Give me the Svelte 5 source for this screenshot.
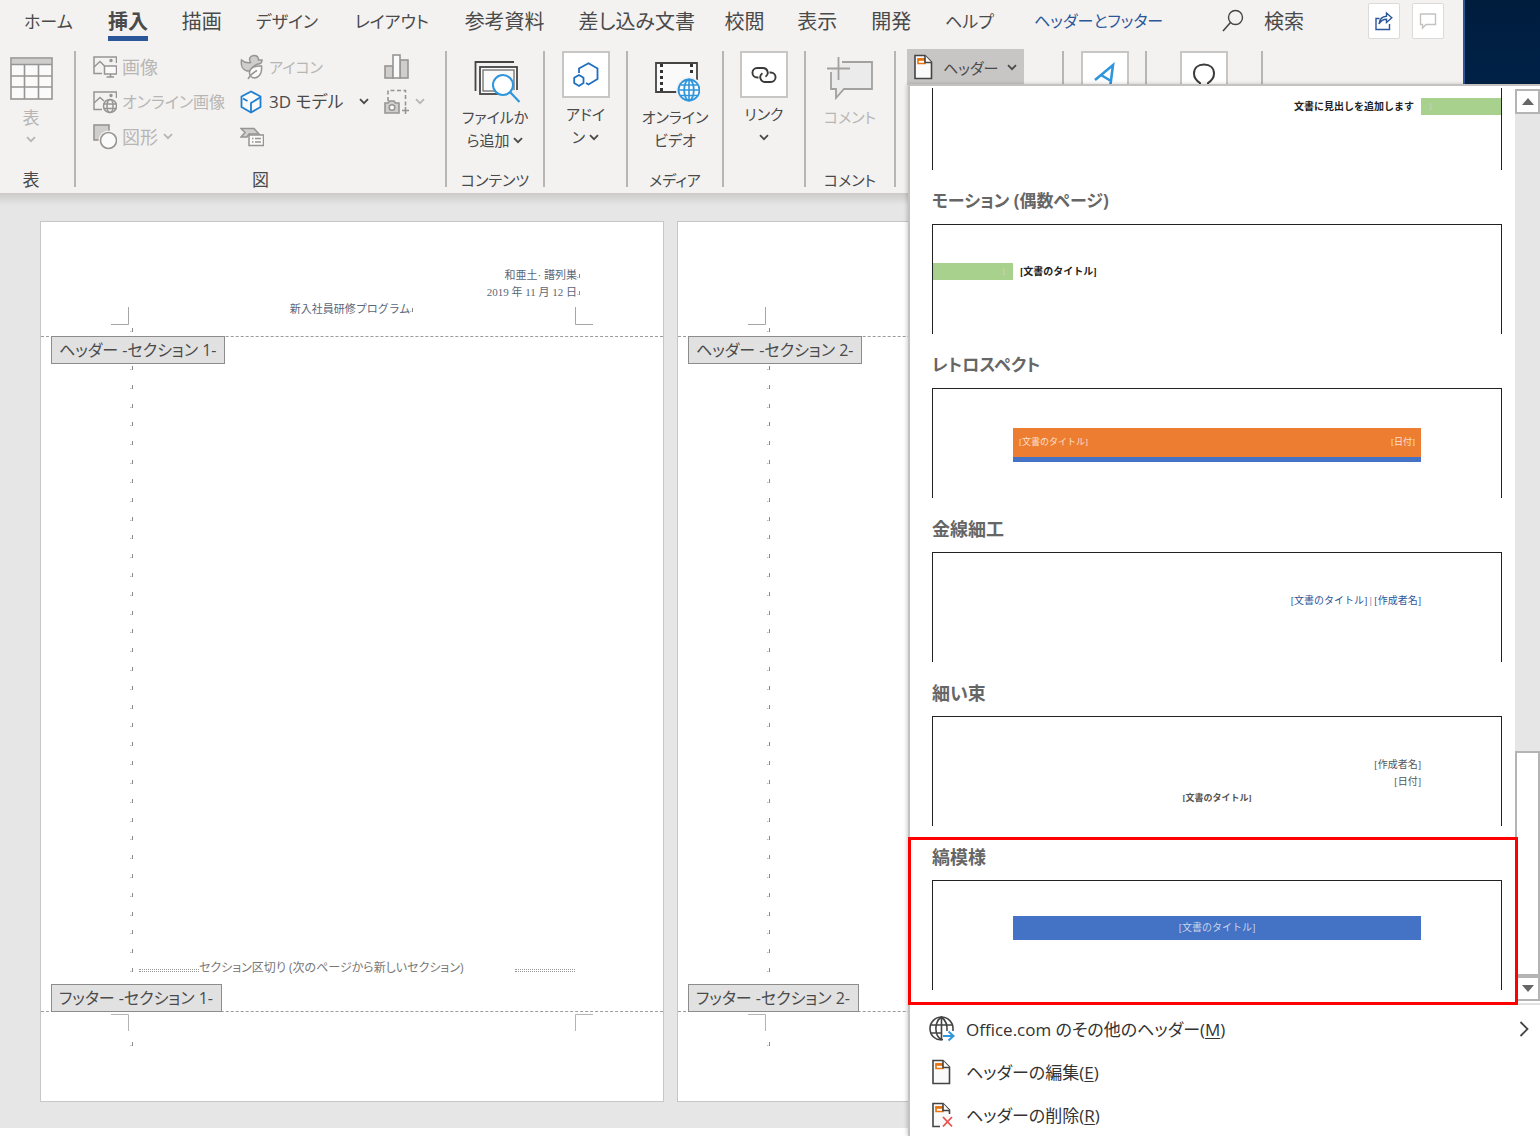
<script>
  const tabs = [
    { label: 'ホーム', kana: true },
    { label: '挿入', active: true },
    { label: '描画' },
    { label: 'デザイン', kana: true },
    { label: 'レイアウト', kana: true },
    { label: '参考資料' },
    { label: '差し込み文書' },
    { label: '校閲' },
    { label: '表示' },
    { label: '開発' },
    { label: 'ヘルプ', kana: true },
    { label: 'ヘッダーとフッター', kana: true, context: true },
  ];
  const pages = [
    { n: 1, header: true },
    { n: 2, header: false },
  ];
  const marks = Array.from({ length: 33 }, (_, i) => i);
</script>

{#snippet chevron()}
  <svg class="chev" width="10" height="7" viewBox="0 0 10 7"><path d="M1 1.2L5 5.2L9 1.2" fill="none" stroke="currentColor" stroke-width="1.800" /></svg>
{/snippet}

{#snippet pilcrow()}
  <svg class="mark" width="4" height="6" viewBox="0 0 4 6"><path d="M2.500 1V5" stroke="#8a8a8a" /><path d="M0 4.500H1.500" stroke="#bbb" /></svg>
{/snippet}

{#snippet docIcon(remove)}
  <svg width="24" height="26" viewBox="-2 0 24 26">
    <path d="M2 1.500H12L18.500 8V24.500H2Z" fill="#fafafa" />
    <path d="M5 5H12V9.500H5Z" fill="#fff" stroke="#e8730c" stroke-width="1.600" />
    <path d="M4.500 5.500H12" stroke="#e8730c" stroke-width="2.600" />
    {#if remove}
      <path d="M9 24.500H2V1.500H12L18.500 8V12" fill="none" stroke="#444" stroke-width="1.600" />
      <path d="M12 15L21 24.500M21 15L12 24.500" stroke="#e8504c" stroke-width="1.800" />
    {:else}
      <path d="M2 1.500H12L18.500 8V24.500H2Z" fill="none" stroke="#444" stroke-width="1.600" />
    {/if}
    <path d="M12 1.500V8.500H18.500" fill="#fff" stroke="#444" stroke-width="1.600" />
  </svg>
{/snippet}

{#snippet crop(kind)}
  <svg width="18" height="18" viewBox="0 0 18 18">
    {#if kind === 'tl'}<path d="M17.500 0V17.500H0" fill="none" stroke="#a6a6a6" />
    {:else if kind === 'tr'}<path d="M0.500 0V17.500H18" fill="none" stroke="#a6a6a6" />
    {:else if kind === 'bl'}<path d="M17.500 18V1.500H0" fill="none" stroke="#b4b4b4" />
    {:else}<path d="M0.500 18V1.500H18" fill="none" stroke="#b4b4b4" />{/if}
  </svg>
{/snippet}

<div class="app">
  <header class="top">
    <div class="ribbon">
      <div class="tabrow">
        <nav class="tabs">
          {#each tabs as t}
            <button class="tab" class:kana={t.kana} class:active={t.active} class:context={t.context}>{t.label}</button>
          {/each}
        </nav>
        <button class="search">
          <svg width="22" height="24" viewBox="0 0 22 24"><circle cx="13.500" cy="8.500" r="7" fill="none" stroke="#444" stroke-width="1.400" /><path d="M8.500 13.500L1 22" stroke="#444" stroke-width="1.600" /></svg>
          検索
        </button>
        <div class="corner">
          <button class="sq" aria-label="共有">
            <svg width="20" height="20" viewBox="0 0 20 20" fill="none" stroke="#2b579a" stroke-width="1.400"><path d="M5.500 7.500H2V18.500H15.500V13" /><path d="M5 13C5.500 8 8 5.500 12.500 5.200V2L17.800 6.800L12.500 11.500V8.300C9 8.300 7 9.500 5 13Z" /></svg>
          </button>
          <button class="sq" aria-label="コメント">
            <svg width="18" height="18" viewBox="0 0 18 18" fill="none" stroke="#c4c2c0" stroke-width="1.400"><path d="M1.500 2H16.500V12.500H7L3.500 16V12.500H1.500Z" /></svg>
          </button>
        </div>
      </div>

      <div class="groups">
        <section class="group g-table">
          <button class="big off">
            <svg width="44" height="44" viewBox="0 0 44 44"><rect x="2" y="1" width="41" height="41" fill="#fafafa" stroke="#979593" stroke-width="1.600" /><rect x="3" y="2" width="39" height="5" fill="#d0cecc" /><path d="M2 7.500H43M2 19H43M2 30H43M15.500 7V42M29.500 7V42" stroke="#979593" stroke-width="1.600" /></svg>
            <span>表</span>
            {@render chevron()}
          </button>
          <h2>表</h2>
        </section>

        <section class="group g-illust">
          <div class="illust">
            <button class="row off">
              <svg width="24" height="24" viewBox="0 0 24 24" fill="none" stroke="#979593" stroke-width="1.500"><path d="M9 18.500H1V2H23.500V8" /><path d="M1 12L7 6.500L11.500 11" /><rect x="11.500" y="11" width="12" height="8" fill="#fafafa" /><path d="M17.500 19V22M13.500 22H21" /><circle cx="18" cy="5.500" r="1" fill="#979593" /></svg>
              画像
            </button>
            <button class="row off kana">
              <svg width="24" height="26" viewBox="0 0 24 26" fill="none" stroke="#979593" stroke-width="1.500">
                <path d="M1.500 6C4 8.500 7 9 10.500 8.500C8.500 5 10 1.500 14 1.500C17 1.500 18.500 3.500 18.500 6H22C22 8.500 20.500 10 18 10C15 11 12 13 10.500 17H7C3 16 0.500 12 1.500 6Z" fill="#d0cecc" />
                <path d="M21.500 12C14 11.500 9 14.500 9.500 19.500C10 23.500 14 25 17.500 23C21 21 22 17 21.500 12Z" fill="#fafafa" /><path d="M8 25C10 21 13 18.500 17 16.500" />
              </svg>
              アイコン
            </button>
            <button class="row off" aria-label="グラフ">
              <svg width="26" height="26" viewBox="0 0 26 26" stroke="#979593" stroke-width="1.600"><rect x="1" y="12" width="8" height="12" fill="#d0cecc" /><rect x="16" y="6" width="8" height="18" fill="#d0cecc" /><rect x="9" y="1" width="7" height="23" fill="#fafafa" /></svg>
            </button>
            <button class="row off mixed">
              <svg width="24" height="24" viewBox="0 0 24 24" fill="none" stroke="#979593" stroke-width="1.500"><path d="M9 19.500H1V2H23.500V8" /><path d="M1 13L7 7.500L11 11" /><circle cx="18" cy="5.500" r="1" fill="#979593" /><circle cx="17" cy="16" r="6.500" fill="#f3f2f1" /><ellipse cx="17" cy="16" rx="3" ry="6.500" /><path d="M10.500 14H23.500M10.500 18.500H23.500" /></svg>
              オンライン画像
            </button>
            <button class="row on">
              <svg width="22" height="24" viewBox="0 0 22 24" fill="#fafafa" stroke="#1e7fd2" stroke-width="1.800"><path d="M11 1.500L20.500 6.500V17L11 22.500L1.500 17V6.500Z" /><path d="M11 22V13L20 7.500M3 8.500L7.500 11" fill="none" /></svg>
              3D モデル
              <span class="push">{@render chevron()}</span>
            </button>
            <button class="row off" aria-label="スクリーンショット">
              <svg width="26" height="26" viewBox="0 0 26 26" fill="none" stroke="#979593" stroke-width="1.600"><path d="M4 12V1.500H21.500V17" stroke-dasharray="4 2.500" /><path d="M21.500 18V25M18 21.500H25" /><path d="M1 14H4L5.500 12H10L11.500 14H15V24H1Z" fill="#d0cecc" /><circle cx="8" cy="18.500" r="2.800" fill="#fafafa" /></svg>
              {@render chevron()}
            </button>
            <button class="row off">
              <svg width="24" height="26" viewBox="0 0 24 26" stroke="#979593" stroke-width="1.600"><rect x="1" y="1" width="15" height="15" fill="#d0cecc" /><circle cx="15.500" cy="16.500" r="10" fill="#f3f2f1" stroke="none" /><circle cx="15.500" cy="16.500" r="8" fill="#fafafa" /></svg>
              図形
              {@render chevron()}
            </button>
            <button class="row off" aria-label="SmartArt">
              <svg width="24" height="20" viewBox="0 0 24 20" stroke="#979593" stroke-width="1.500"><path d="M1 1.500H14L19 7H9L7 10H1L5 5.500Z" fill="#d0cecc" /><rect x="9" y="8" width="14.500" height="10.500" fill="#fafafa" /><path d="M12 11.500H13.500M15 11.500H21M12 15H13.500M15 15H21" /></svg>
            </button>
          </div>
          <h2>図</h2>
        </section>

        <section class="group g-content">
          <button class="big low">
            <svg width="50" height="44" viewBox="-4 0 50 44" fill="none"><path d="M1.500 31V2H40" stroke="#444" stroke-width="1.800" /><rect x="6" y="7" width="37" height="27" fill="#fafafa" stroke="#444" stroke-width="1.800" /><rect x="9" y="10" width="31" height="21" stroke="#777" stroke-width="1.400" /><path d="M32 36L36 30H45V41Z" fill="#f3f2f1" /><circle cx="29" cy="25" r="10" fill="#fff" stroke="#2f95dc" stroke-width="2" /><path d="M36 32L45.500 42" stroke="#2f95dc" stroke-width="2.200" /></svg>
            <span>ファイルか<br />ら追加 {@render chevron()}</span>
          </button>
          <h2 class="kana">コンテンツ</h2>
        </section>

        <section class="group g-addin">
          <button class="big boxed">
            <span class="tile"><svg width="26" height="26" viewBox="0 0 26 26" fill="none" stroke="#1e6fc0" stroke-width="1.800"><path d="M6 11V6.500L15.500 1.200L24.500 6.500V17L15.500 22.500L13 21" /><path d="M6 13L10.500 15.700V21L6 24L1.200 21V15.700Z" /></svg></span>
            <span>アドイ<br />ン {@render chevron()}</span>
          </button>
        </section>

        <section class="group g-media">
          <button class="big low">
            <svg width="50" height="44" viewBox="-4 0 50 44" fill="none"><path d="M26 32H2V3H43V20" fill="#fafafa" stroke="#444" stroke-width="1.800" /><path d="M7.500 4V32M37.500 4V16" stroke="#333" stroke-width="3" stroke-dasharray="3 3" /><circle cx="35" cy="30" r="13" fill="#f3f2f1" /><circle cx="35" cy="30" r="10.500" fill="#fff" stroke="#2f95dc" stroke-width="1.800" /><ellipse cx="35" cy="30" rx="4.800" ry="10.500" stroke="#2f95dc" stroke-width="1.800" /><path d="M35 19.500V40.500M24.500 30H45.500M26.500 25H43.500M26.500 35.500H43.500" stroke="#2f95dc" stroke-width="1.600" /></svg>
            <span>オンライン<br />ビデオ</span>
          </button>
          <h2 class="kana">メディア</h2>
        </section>

        <section class="group g-link">
          <button class="big boxed">
            <span class="tile"><svg width="26" height="18" viewBox="0 0 26 18" fill="none" stroke="#3b3a39" stroke-width="1.900"><path d="M7.500 11.500H6.200A4.700 4.700 0 0 1 6.200 2H12A4.700 4.700 0 0 1 14.500 10.700" /><path d="M18.500 6.500H19.800A4.700 4.700 0 0 1 19.800 16H14A4.700 4.700 0 0 1 11.500 7.300" /></svg></span>
            <span>リンク<br />{@render chevron()}</span>
          </button>
        </section>

        <section class="group g-comment">
          <button class="big off">
            <svg width="48" height="44" viewBox="0 0 48 44" fill="none" stroke="#a3a19f" stroke-width="1.800"><path d="M17 5H46V32H18L10 41V32H5V14L17 5Z" fill="#ebebeb" stroke="none" /><path d="M16 5H46V32H18L10 41V32H5V15" /><path d="M12.500 0V23M1 11.500H24" /></svg>
            <span>コメント</span>
          </button>
          <h2 class="kana">コメント</h2>
        </section>

        <section class="group g-header">
          <button class="dropbtn" aria-expanded="true">
            {@render docIcon(false)}
            ヘッダー
            {@render chevron()}
          </button>
        </section>

        <section class="group g-text">
          <button class="big boxed" aria-label="テキスト">
            <span class="tile"><svg width="24" height="28" viewBox="0 0 24 28" fill="none" stroke="#2f95dc" stroke-width="2.600"><path d="M2 19L20 4L17 27M8 14L18 20" /></svg></span>
          </button>
        </section>

        <section class="group g-symbol">
          <button class="big boxed" aria-label="記号と特殊文字">
            <span class="tile"><svg width="24" height="24" viewBox="0 0 24 24" fill="none" stroke="#3b3a39" stroke-width="2"><path d="M1 22H8V20C4 17.500 2 14 2 10.500C2 5 6 1.500 12 1.500C18 1.500 22 5 22 10.500C22 14 20 17.500 16 20V22H23" /></svg></span>
          </button>
        </section>
      </div>
    </div>
    <div class="desktop"></div>
  </header>

  <main class="workspace">
    {#each pages as p}
      <article class="page">
        <div class="page-head">
          <div class="running">
            {#if p.header}
              <p>和亜土· 譜列巣{@render pilcrow()}</p>
              <p>2019 年 11 月 12 日{@render pilcrow()}</p>
            {/if}
          </div>
          <div class="corners">
            {@render crop('tl')}
            {#if p.header}<p class="title">新入社員研修プログラム{@render pilcrow()}</p>{/if}
            {@render crop('tr')}
          </div>
          <div class="lone">{@render pilcrow()}</div>
        </div>
        <div class="page-body">
          <span class="tag">ヘッダー -セクション {p.n}-</span>
          <ul class="marks">
            {#each marks as m}
              <li>
                {@render pilcrow()}
                {#if p.header && m === marks.length - 1}
                  <span class="rule"></span>
                  <span class="break">セクション区切り (次のページから新しいセクション)</span>
                  <span class="rule"></span>
                {/if}
              </li>
            {/each}
          </ul>
          <span class="tag">フッター -セクション {p.n}-</span>
        </div>
        <div class="page-foot">
          <div class="corners low">
            {@render crop('bl')}
            {@render crop('br')}
          </div>
          <div class="lone">{@render pilcrow()}</div>
        </div>
      </article>
    {/each}
  </main>

  <div class="menu">
    <div class="gallery">
      <div class="items">
        <button class="item first">
          <span class="preview"><span class="motion right"><b>文書に見出しを追加します</b><i>1</i></span></span>
        </button>
        <button class="item">
          <span class="name kana">モーション (偶数ページ)</span>
          <span class="preview"><span class="motion"><i>1</i><b>[文書のタイトル]</b></span></span>
        </button>
        <button class="item">
          <span class="name kana">レトロスペクト</span>
          <span class="preview inset"><span class="retro"><span>[文書のタイトル]</span><span>[日付]</span></span></span>
        </button>
        <button class="item">
          <span class="name">金線細工</span>
          <span class="preview inset"><span class="filigree">[文書のタイトル] | [作成者名]</span></span>
        </button>
        <button class="item">
          <span class="name">細い束</span>
          <span class="preview inset"><span class="wisp"><span>[作成者名]</span><span>[日付]</span><b>[文書のタイトル]</b></span></span>
        </button>
        <button class="item picked">
          <span class="name">縞模様</span>
          <span class="preview inset"><span class="band">[文書のタイトル]</span></span>
        </button>
      </div>
      <div class="scroll">
        <button aria-label="上へスクロール"><svg width="12" height="7" viewBox="0 0 12 7"><path d="M0 7L6 0L12 7Z" fill="#666" /></svg></button>
        <span class="track"></span>
        <span class="thumb"></span>
        <button aria-label="下へスクロール"><svg width="12" height="7" viewBox="0 0 12 7"><path d="M0 0L6 7L12 0Z" fill="#666" /></svg></button>
      </div>
    </div>
    <div class="commands">
      <button class="cmd">
        <svg width="26" height="26" viewBox="0 0 26 26" fill="none" stroke="#444" stroke-width="1.600"><path d="M14 23.500C6 25 1 19 1 12.500A11.500 11.500 0 0 1 24 12.500V15" /><path d="M12.500 24C5 19 5 6 12.500 1C17 4.500 18.500 10 18 15M12.500 1V24M1.500 9H23.500M1.500 17H13" /><path d="M14 20H24M19.500 15.500L24.500 20L19.500 24.500" stroke="#2f95dc" stroke-width="2" /></svg>
        <span>Office.com のその他のヘッダー(<u>M</u>)</span>
        <svg width="10" height="16" viewBox="0 0 10 16"><path d="M1.500 1L8.500 8L1.500 15" fill="none" stroke="#444" stroke-width="1.800" /></svg>
      </button>
      <button class="cmd">
        {@render docIcon(false)}
        <span>ヘッダーの編集(<u>E</u>)</span>
      </button>
      <button class="cmd">
        {@render docIcon(true)}
        <span>ヘッダーの削除(<u>R</u>)</span>
      </button>
    </div>
  </div>
</div>

<style>
  :global(body) {
    margin: 0;
    background: #fff;
  }
  .app {
    position: relative;
    display: flex;
    flex-direction: column;
    min-height: 100vh;
    overflow: hidden;
    font-family: 'Open Sans', 'Noto Sans CJK JP', sans-serif;
    font-feature-settings: 'palt';
    font-size: 18px;
    color: #4a4a4a;
  }
  .app * {
    box-sizing: border-box;
  }
  button {
    margin: 0;
    padding: 0;
    border: 0;
    background: none;
    font: inherit;
    font-feature-settings: inherit;
    color: inherit;
    white-space: nowrap;
  }
  svg {
    display: block;
    flex: none;
  }
  h2,
  p,
  ul {
    margin: 0;
    padding: 0;
    list-style: none;
  }
  .top {
    display: flex;
  }
  .desktop {
    width: 77px;
    background: linear-gradient(#001c3d, #002a55);
    border-left: 2px solid #2b579a;
  }
  .ribbon {
    flex: 1;
    min-width: 0;
    background: #f3f2f1;
  }
  .tabrow {
    display: flex;
    height: 49px;
    padding: 0 19px 0 24px;
    font-size: 20px;
  }
  .tabs {
    display: grid;
    grid-template-columns: 84fr 74fr 74fr 99fr 110fr 114fr 146fr 73fr 74fr 74fr 89fr 188fr;
    flex: 1;
    justify-items: start;
  }
  .tab {
    width: 0;
    height: 41px;
    display: flex;
    line-height: 43px;
  }
  .tab.kana {
    font-size: 17px;
  }
  .tab.active {
    width: auto;
    font-weight: 700;
    border-bottom: 5px solid #2b579a;
  }
  .tab.context {
    font-size: 16px;
    color: #2b579a;
  }
  .search {
    display: flex;
    gap: 20px;
    height: 41px;
    align-items: center;
    margin-right: 64px;
  }
  .corner {
    display: flex;
    gap: 12px;
    padding-top: 3px;
  }
  .sq {
    display: grid;
    place-items: center;
    width: 32px;
    height: 36px;
    background: #fff;
    border: 1px solid #dddbd9;
    border-radius: 2px;
  }
  .groups {
    display: flex;
    height: 144px;
    font-size: 18px;
  }
  .group {
    display: flex;
    flex-direction: column;
    align-items: center;
    flex: none;
    margin: 2px 0 6px;
    border-right: 2px solid #b8b6b4;
  }
  .group h2 {
    margin-top: auto;
    font-size: 17px;
    font-weight: 400;
    line-height: 14px;
  }
  .group h2.kana {
    font-size: 15px;
  }
  .g-table { width: 76px; }
  .g-table h2, .g-table .big { padding-right: 12px; }
  .g-illust { width: 371px; }
  .g-content { width: 98px; }
  .g-addin { width: 83px; }
  .g-media { width: 96px; }
  .g-link { width: 82px; }
  .g-comment { width: 90px; }
  .g-header {
    width: 168px;
    align-items: flex-start;
    padding-left: 11px;
  }
  .g-text { width: 83px; }
  .g-symbol { width: 116px; }
  .off {
    color: #b8b6b4;
  }
  .big {
    display: flex;
    flex-direction: column;
    align-items: center;
    gap: 2px;
    padding-top: 6px;
    line-height: 23px;
    font-size: 15px;
  }
  .g-table .big {
    font-size: 17px;
  }
  .big > span:not(.tile) {
    padding-top: 3px;
  }
  .big.low {
    padding-top: 9px;
  }
  .big.low > span {
    padding-top: 0;
  }
  .big .chev {
    display: inline-block;
    vertical-align: 2px;
  }
  .g-table .chev {
    margin-top: 5px;
  }
  .big.boxed {
    padding: 0;
  }
  .tile {
    display: grid;
    place-items: center;
    width: 48px;
    height: 47px;
    background: #fff;
    border: 2px solid #c8c6c4;
  }
  .illust {
    display: grid;
    grid-template-columns: 147px 144px 1fr;
    grid-auto-rows: 35px;
    align-self: stretch;
    padding-left: 17px;
    margin-top: -2px;
  }
  .row {
    display: flex;
    align-items: center;
    gap: 5px;
    line-height: 24px;
  }
  .row.mixed {
    font-size: 16px;
  }
  .row.kana {
    font-size: 15px;
  }
  .row.on {
    gap: 7px;
    font-size: 17px;
  }
  .push {
    flex: 1;
    display: flex;
    justify-content: flex-end;
    padding-right: 15px;
  }
  .dropbtn {
    display: flex;
    align-items: center;
    gap: 8px;
    width: 117px;
    height: 36px;
    margin-top: -2px;
    padding-left: 4px;
    font-size: 15px;
    background: #c8c6c4;
  }

  .workspace {
    display: flex;
    gap: 13px;
    height: 935px;
    padding: 28px 0 26px 40px;
    overflow: hidden;
    background: linear-gradient(#cbcac9, #e6e6e6 12px);
  }
  .page {
    display: flex;
    flex-direction: column;
    flex: none;
    width: 624px;
    background: #fff;
    border: 1px solid #c6c6c6;
  }
  .page-head {
    height: 114px;
    padding-top: 45px;
    font: 11px/17px 'Liberation Serif', 'Noto Sans CJK JP', serif;
    color: #5a6779;
  }
  .running {
    height: 34px;
    padding-right: 82px;
  }
  .running p {
    display: flex;
    justify-content: flex-end;
    align-items: center;
  }
  .mark {
    display: inline-block;
  }
  .corners {
    display: flex;
    justify-content: space-between;
    align-items: flex-end;
    height: 24px;
    padding: 0 70px;
  }
  .corners.low {
    height: 19px;
  }
  .title {
    align-self: flex-start;
  }
  .lone {
    display: flex;
    padding: 2px 0 0 89px;
  }
  .page-foot .lone {
    padding-top: 10px;
  }
  .page-body {
    display: flex;
    flex-direction: column;
    align-items: flex-start;
    flex: 1;
    border: dashed #9c9c9c;
    border-width: 1px 0;
  }
  .tag {
    margin: -1px 10px;
    padding: 0 8px 0 7px;
    line-height: 26px;
    font-size: 16px;
    background: #e1e1e1;
    border: 1px solid #8c8c8c;
  }
  .marks {
    display: flex;
    flex-direction: column;
    justify-content: space-between;
    flex: 1;
    align-self: stretch;
    padding: 2px 0 12px;
  }
  .marks li {
    display: flex;
    align-items: center;
    height: 6px;
    padding-left: 89px;
  }
  .rule {
    width: 60px;
    height: 3px;
    border: dotted #999;
    border-width: 1px 0;
  }
  .mark + .rule {
    margin-left: 5px;
  }
  .break {
    width: 316px;
    padding-bottom: 4px;
    font-size: 12px;
    line-height: 18px;
    color: #777;
  }
  .page-foot {
    height: 89px;
  }

  .menu {
    position: absolute;
    top: 84px;
    right: 0;
    bottom: 0;
    width: 632px;
    display: flex;
    flex-direction: column;
    background: #fff;
    border: solid #c3c2c1;
    border-width: 2px 0 0 2px;
    box-shadow: -1px 0 4px #0003;
  }
  .gallery {
    display: flex;
    height: 920px;
    padding-top: 2px;
    border-bottom: 2px solid #e1e1e1;
  }
  .items {
    flex: 1;
    display: flex;
    flex-direction: column;
  }
  .item {
    position: relative;
    display: flex;
    flex-direction: column;
    height: 164px;
    padding: 0 13px 0 22px;
    text-align: left;
    font-size: 18px;
  }
  .item.first {
    height: 82px;
  }
  .picked::after {
    content: '';
    position: absolute;
    inset: 11px -3px -15px -2px;
    border: 3px solid #f00;
  }
  .name {
    height: 54px;
    padding-top: 17px;
    line-height: 28px;
    font-weight: 700;
    color: #666;
  }
  .name.kana {
    font-size: 17px;
  }
  .preview {
    flex: 1;
    display: flex;
    flex-direction: column;
    padding-top: 38px;
    border: solid #222;
    border-width: 1px 1px 0;
    font: 10px/17px 'Liberation Serif', 'Noto Sans CJK JP', serif;
    font-feature-settings: normal;
    color: #222;
  }
  .first .preview {
    padding-top: 10px;
    border-top: 0;
  }
  .preview.inset {
    padding: 39px 80px 0;
  }
  .picked .preview {
    padding-top: 35px;
  }
  .motion {
    display: flex;
    gap: 7px;
  }
  .motion.right {
    justify-content: flex-end;
  }
  .motion i {
    width: 80px;
    padding: 0 7px;
    text-align: right;
    font-style: normal;
    color: #c5d0bd;
    background: #a9d18e;
  }
  .motion.right i {
    text-align: left;
  }
  .retro {
    display: flex;
    justify-content: space-between;
    padding: 0 6px;
    font-size: 9px;
    line-height: 29px;
    color: #fbe0cd;
    background: #ed7d31;
    border-bottom: 5px solid #4472c4;
  }
  .filigree {
    text-align: right;
    color: #2f5597;
  }
  .wisp {
    display: flex;
    flex-direction: column;
    text-align: right;
    color: #555;
  }
  .wisp b {
    text-align: center;
    font-size: 9px;
  }
  .band {
    text-align: center;
    line-height: 24px;
    color: #c9d5ea;
    background: #4472c4;
  }
  .scroll {
    display: flex;
    flex-direction: column;
    width: 25px;
    margin: 1px 0 2px;
    background: #e6e6e6;
  }
  .scroll button {
    display: grid;
    place-items: center;
    height: 25px;
    background: #fff;
    border: 2px solid #b4b4b4;
  }
  .track {
    flex: 640;
  }
  .thumb {
    flex: 222;
    background: #fff;
    border: 2px solid #b4b4b4;
  }
  .commands {
    padding-top: 2px;
  }
  .cmd {
    display: grid;
    grid-template-columns: 37px 1fr 21px;
    align-items: center;
    width: 100%;
    height: 43px;
    padding-left: 19px;
    text-align: left;
    font-size: 17px;
    color: #333;
  }
  .cmd u {
    text-underline-offset: 2px;
  }
</style>
